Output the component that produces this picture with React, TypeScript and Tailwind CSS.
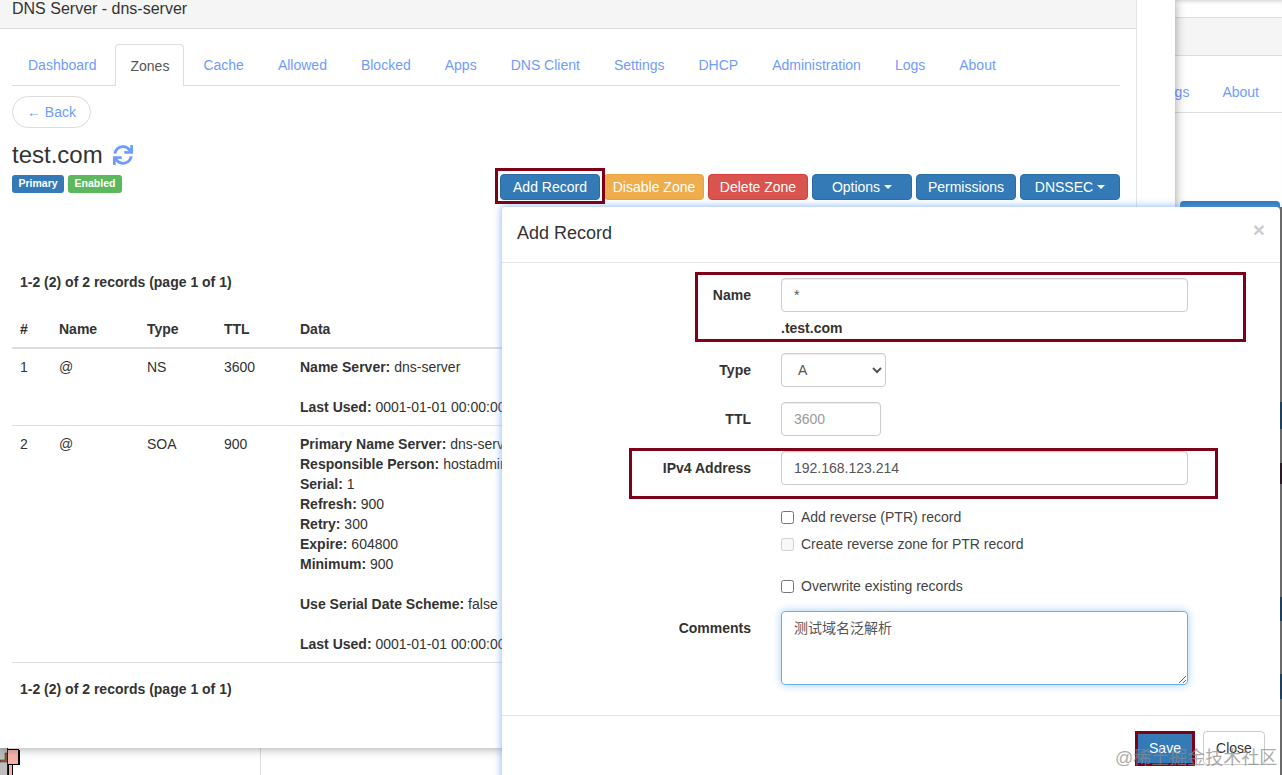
import { FaSync } from "react-icons/fa";

const tabs = ["Dashboard", "Zones", "Cache", "Allowed", "Blocked", "Apps", "DNS Client", "Settings", "DHCP", "Administration", "Logs", "About"];

const soa: [string, string][] = [
  ["Primary Name Server:", "dns-server"],
  ["Responsible Person:", "hostadmin@test.com"],
  ["Serial:", "1"],
  ["Refresh:", "900"],
  ["Retry:", "300"],
  ["Expire:", "604800"],
  ["Minimum:", "900"],
];

function Caret() {
  return <span className="ml-[4px] inline-block h-0 w-0 border-x-4 border-t-4 border-x-transparent border-t-white align-middle" />;
}

function Btn({ children, cls }: { children: React.ReactNode; cls: string }) {
  return (
    <button className={`flex h-[26px] w-[100px] items-center justify-center rounded-[4px] border text-[14px] text-white ${cls}`}>
      {children}
    </button>
  );
}

function Field({ label, children, cls = "items-center", labelCls = "" }: { label: string; children: React.ReactNode; cls?: string; labelCls?: string }) {
  return (
    <div className={`flex ${cls}`}>
      <label className={`w-[279px] shrink-0 pr-[30px] text-right text-[14px] font-bold text-[#333] ${labelCls}`}>{label}</label>
      {children}
    </div>
  );
}

function Check({ label, disabled, cls = "" }: { label: string; disabled?: boolean; cls?: string }) {
  return (
    <label className={`flex h-[20px] items-center gap-[7px] pl-[249px] text-[14px] text-[#444] ${cls}`}>
      <input type="checkbox" disabled={disabled} className="m-0 h-[13px] w-[13px]" />
      {label}
    </label>
  );
}

const inputCls = "h-[34px] rounded-[4px] border border-[#ccc] bg-white px-[12px] text-[14px] text-[#555] shadow-[inset_0_1px_1px_rgba(0,0,0,0.075)] outline-none";

export default function App() {
  return (
    <div className="relative h-[775px] w-[1282px] overflow-hidden bg-white font-['Liberation_Sans','Noto_Sans_CJK_SC',sans-serif] text-[14px] text-[#333]">
      {/* window behind, right side */}
      <div className="absolute left-[1175px] top-0 flex h-[775px] w-[107px] flex-col overflow-hidden bg-white shadow-[inset_0_4px_4px_-3px_rgba(0,0,0,0.2)]">
        <div className="mt-[17px] h-[39px] shrink-0 border-y border-[#ddd] bg-[#f5f5f5]" />
        <div className="flex h-[57px] shrink-0 items-center justify-end gap-[33px] border-b border-[#ddd] pr-[23px] pt-[17px] text-[#6f9bff]">
          <span>Logs</span>
          <span>About</span>
        </div>
        <div className="ml-[5px] mt-[88px] h-[10px] w-[100px] shrink-0 rounded-t-[4px] bg-[#337ab7]" />
      </div>

      {/* page behind, bottom left */}
      <div className="absolute left-0 top-[748px] h-[27px] w-[502px]">
        <div className="ml-[260px] h-full w-px bg-[#ddd]" />
        <svg className="absolute left-0 top-0" width="21" height="27" viewBox="0 0 21 27">
          <rect x="0" y="0" width="7" height="27" fill="#bdbdbd" />
          <path d="M0 12h5V5h2v9H0z" fill="#a9623a" stroke="#222" strokeWidth="0.5" />
          <rect x="7" y="0" width="1" height="27" fill="#222" />
          <rect x="8" y="2" width="10" height="14" fill="#f5b0ac" />
          <path d="M8 1h11v1h1v15H8v-1h10V2H8z" fill="#000" />
          <rect x="8" y="17" width="5" height="10" fill="#000" />
          <rect x="9" y="17" width="3" height="10" fill="#f5b0ac" />
        </svg>
      </div>

      {/* main window */}
      <div className="absolute left-0 top-0 h-[748px] w-[1175px] bg-white shadow-[0_0_10px_rgba(0,0,0,0.4)]">
        <div className="h-full w-[1137px] border-r border-[#e3e3e3]">
          <div className="h-[29px] border-b border-[#ddd] bg-[#f5f5f5] pl-[12px] text-[16px] leading-[18px] text-[#333]">
            DNS Server - dns-server
          </div>
          <div className="w-[1120px] pl-[12px]">
            <div className="mt-[15px] flex h-[42px] border-b border-[#ddd] pl-[1px]">
              {tabs.map((t) =>
                t === "Zones" ? (
                  <span key={t} className="-ml-[1px] mr-[4px] flex h-[42px] items-center rounded-t-[4px] border border-b-0 border-[#ddd] bg-white pl-[14px] pr-[14px] pt-[2px] text-[#555]">
                    <span className="ml-[1px]">{t}</span>
                  </span>
                ) : (
                  <span key={t} className="mr-[4px] flex h-[41px] items-center px-[15px] pt-[2px] text-[#6f9bff]">
                    {t}
                  </span>
                )
              )}
            </div>
            <button className="mt-[10px] flex h-[32px] w-[79px] items-center justify-center rounded-full border border-[#ddd] bg-white text-[#6f9bff]">
              ← Back
            </button>
            <div className="mt-[13px] flex items-end justify-between">
              <div>
                <div className="flex items-center gap-[10px] text-[24px] leading-[27px] text-[#333]">
                  test.com
                  <FaSync className="h-[20px] w-[20px] text-[#6f9bff]" />
                </div>
                <div className="mb-[7px] mt-[7px] flex gap-[4px] text-[10.5px] font-bold leading-[17px] text-white">
                  <span className="h-[18px] rounded-[3px] bg-[#337ab7] px-[6.5px]">Primary</span>
                  <span className="h-[18px] rounded-[3px] bg-[#5cb85c] px-[6.5px]">Enabled</span>
                </div>
              </div>
              <div className="flex gap-[4px]">
                <Btn cls="border-[#2e6da4] bg-[#337ab7]">Add Record</Btn>
                <Btn cls="border-[#eea236] bg-[#f0ad4e]">Disable Zone</Btn>
                <Btn cls="border-[#d43f3a] bg-[#d9534f]">Delete Zone</Btn>
                <Btn cls="border-[#2e6da4] bg-[#337ab7]">Options<Caret /></Btn>
                <Btn cls="border-[#2e6da4] bg-[#337ab7]">Permissions</Btn>
                <Btn cls="border-[#2e6da4] bg-[#337ab7]">DNSSEC<Caret /></Btn>
              </div>
            </div>
            <div className="mt-[72px] pl-[8px] font-bold leading-[20px]">1-2 (2) of 2 records (page 1 of 1)</div>
            <table className="mt-[19px] w-[1108px] table-fixed border-collapse text-left leading-[20px]">
              <colgroup>
                <col className="w-[39px]" />
                <col className="w-[88px]" />
                <col className="w-[77px]" />
                <col className="w-[76px]" />
                <col />
              </colgroup>
              <thead>
                <tr className="border-b-2 border-[#ddd]">
                  <th className="p-[8px]">#</th>
                  <th className="p-[8px]">Name</th>
                  <th className="p-[8px]">Type</th>
                  <th className="p-[8px]">TTL</th>
                  <th className="p-[8px]">Data</th>
                </tr>
              </thead>
              <tbody className="align-top">
                <tr className="border-b border-[#ddd]">
                  <td className="p-[8px]">1</td>
                  <td className="p-[8px]">@</td>
                  <td className="p-[8px]">NS</td>
                  <td className="p-[8px]">3600</td>
                  <td className="whitespace-nowrap p-[8px]">
                    <b>Name Server:</b> dns-server
                    <br />
                    <br />
                    <b>Last Used:</b> 0001-01-01 00:00:00
                  </td>
                </tr>
                <tr className="border-b border-[#ddd]">
                  <td className="p-[8px]">2</td>
                  <td className="p-[8px]">@</td>
                  <td className="p-[8px]">SOA</td>
                  <td className="p-[8px]">900</td>
                  <td className="whitespace-nowrap p-[8px]">
                    {soa.map(([k, v]) => (
                      <div key={k}>
                        <b>{k}</b> {v}
                      </div>
                    ))}
                    <br />
                    <b>Use Serial Date Scheme:</b> false
                    <br />
                    <br />
                    <b>Last Used:</b> 0001-01-01 00:00:00
                  </td>
                </tr>
              </tbody>
            </table>
            <div className="mt-[16px] pl-[8px] font-bold leading-[20px]">1-2 (2) of 2 records (page 1 of 1)</div>
          </div>
        </div>
      </div>

      {/* modal */}
      <div className="absolute left-[502px] top-[207px] h-[600px] w-[778px] rounded-[4px] bg-white shadow-[0_0_6px_2px_rgba(102,160,240,0.55)]">
        <div className="flex h-[56px] items-start justify-between border-b border-[#e5e5e5] px-[15px] pt-[14px]">
          <span className="text-[18px] leading-[24px] text-[#333]">Add Record</span>
          <span className="-mt-[1px] text-[21px] font-bold leading-[19px] text-[#000] opacity-20">×</span>
        </div>
        <div className="h-[453px] border-b border-[#e5e5e5] pt-[15px]">
          <Field label="Name">
            <input className={`${inputCls} w-[407px]`} defaultValue="*" />
          </Field>
          <div className="mt-[6px] pl-[279px] font-bold leading-[20px]">.test.com</div>
          <div className="mt-[15px] flex flex-col gap-[15px]">
            <Field label="Type">
              <select className={`${inputCls} w-[105px]`} defaultValue="A">
                <option>A</option>
              </select>
            </Field>
            <Field label="TTL">
              <input className={`${inputCls} w-[100px] placeholder:text-[#999]`} placeholder="3600" />
            </Field>
            <Field label="IPv4 Address">
              <input className={`${inputCls} w-[407px]`} defaultValue="192.168.123.214" />
            </Field>
          </div>
          <div className="pl-[30px]">
            <Check label="Add reverse (PTR) record" cls="mt-[22px]" />
            <Check label="Create reverse zone for PTR record" disabled cls="mt-[7px]" />
            <Check label="Overwrite existing records" cls="mt-[22px]" />
          </div>
          <div className="mt-[15px]">
            <Field label="Comments" cls="items-start" labelCls="pt-[7px]">
              <textarea
                className="h-[74px] w-[407px] rounded-[4px] border border-[#66afe9] px-[12px] py-[6px] text-[14px] leading-[20px] text-[#555] shadow-[0_0_8px_rgba(102,175,233,0.6)] outline-none"
                defaultValue="测试域名泛解析"
              />
            </Field>
          </div>
        </div>
        <div className="flex justify-end gap-[11px] pr-[15px] pt-[15px]">
          <button className="h-[34px] w-[54px] rounded-[4px] bg-[#337ab7] text-white">Save</button>
          <button className="h-[34px] w-[62px] rounded-[4px] border border-[#ccc] bg-white text-[#333]">Close</button>
        </div>
      </div>

      {/* sliver of a window beyond the modal */}
      <div className="absolute left-[1280px] top-[207px] flex h-[568px] w-[2px] flex-col bg-[#6a6a6a]">
        <div className="mt-[195px] h-[27px] bg-[#1f3f5f]" />
        <div className="mt-[34px] h-[21px] bg-[#2a1a26]" />
        <div className="mt-[113px] h-[24px] bg-[#1f3f5f]" />
        <div className="mt-[53px] h-[25px] bg-[#1f3f5f]" />
      </div>

      {/* annotations */}
      <div className="absolute left-[495px] top-[168px] h-[36px] w-[110px] border-[3px] border-[#7f0019]" />
      <div className="absolute left-[695px] top-[272px] h-[70px] w-[551px] border-[3px] border-[#7f0019]" />
      <div className="absolute left-[629px] top-[448px] h-[51px] w-[589px] border-[3px] border-[#7f0019]" />
      <div className="absolute left-[1135px] top-[731px] h-[35px] w-[60px] border-[3px] border-[#7f0019]" />
      <div className="absolute left-[1115px] top-[747px] text-[18px] leading-[22px] text-[#8a8a8a] opacity-70">@稀土掘金技术社区</div>
    </div>
  );
}
